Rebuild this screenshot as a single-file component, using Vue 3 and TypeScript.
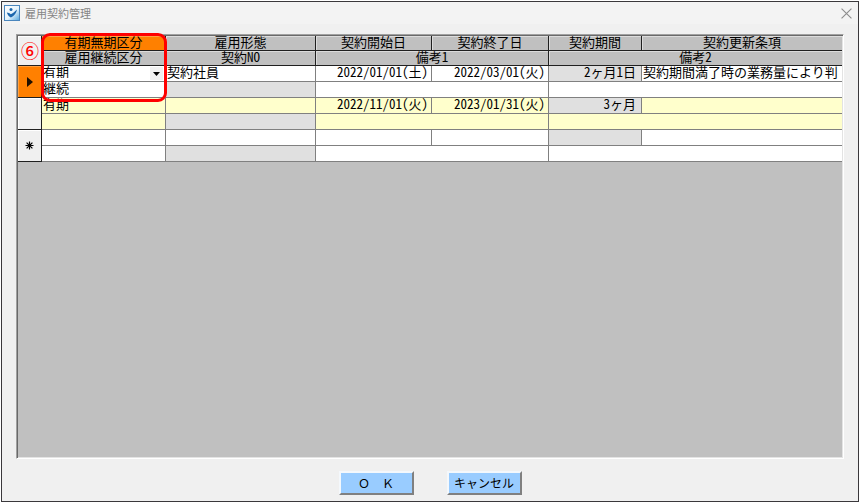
<script setup lang="ts">
import { ref } from 'vue'

interface Contract {
  mark: 'current' | 'none' | 'new'
  term: string
  renewal: string
  form: string
  start: string
  end: string
  period: string
  condition: string
}

const rows = ref<Contract[]>([
  {
    mark: 'current',
    term: '有期',
    renewal: '継続',
    form: '契約社員',
    start: '2022/01/01(土)',
    end: '2022/03/01(火)',
    period: '2ヶ月1日',
    condition: '契約期間満了時の業務量により判',
  },
  {
    mark: 'none',
    term: '有期',
    renewal: '',
    form: '',
    start: '2022/11/01(火)',
    end: '2023/01/31(火)',
    period: '3ヶ月',
    condition: '',
  },
  { mark: 'new', term: '', renewal: '', form: '', start: '', end: '', period: '', condition: '' },
])
</script>

<template>
  <div class="screen">
    <section class="window">
      <header class="titlebar">
        <svg class="logo" viewBox="0 0 16 16" aria-hidden="true">
          <defs>
            <linearGradient id="logo-fill" x1="0" y1="0" x2="1" y2="1">
              <stop offset="0" stop-color="#ffffff" />
              <stop offset="0.55" stop-color="#e4f3fc" />
              <stop offset="1" stop-color="#4fa3dc" />
            </linearGradient>
          </defs>
          <rect x="0.5" y="0.5" width="15" height="15" fill="url(#logo-fill)" stroke="#4a86bd" />
          <circle cx="7" cy="4.6" r="1.5" fill="#1c67ae" />
          <path d="M2.8 7.4C4.4 7.4 5.6 8.2 6.8 9.2C8.6 8.4 10.6 7 13 4.6C12.2 8.4 9.8 11.8 6.8 12.4C5.2 11.8 3.6 9.8 2.8 7.4Z" fill="#1c67ae" />
        </svg>
        <h1>雇用契約管理</h1>
        <button class="close" type="button" aria-label="閉じる">
          <svg viewBox="0 0 10 10" aria-hidden="true">
            <path d="M0.5 0.5L9.5 9.5M9.5 0.5L0.5 9.5" stroke="#8c8c8c" fill="none" />
          </svg>
        </button>
      </header>

      <main class="sheet">
        <table>
          <colgroup>
            <col class="w-mark" />
            <col class="w-term" />
            <col class="w-form" />
            <col class="w-date" />
            <col class="w-end" />
            <col class="w-period" />
            <col />
          </colgroup>
          <thead>
            <tr>
              <th class="mark" rowspan="2"></th>
              <th class="selected">有期無期区分</th>
              <th>雇用形態</th>
              <th>契約開始日</th>
              <th>契約終了日</th>
              <th>契約期間</th>
              <th>契約更新条項</th>
            </tr>
            <tr>
              <th>雇用継続区分</th>
              <th>契約NO</th>
              <th colspan="2">備考1</th>
              <th colspan="2">備考2</th>
            </tr>
          </thead>
          <tbody v-for="(row, i) in rows" :key="i" :class="{ alt: i % 2 === 1 }">
            <tr>
              <th class="mark" :class="{ selected: row.mark === 'current' }" rowspan="2">
                <svg v-if="row.mark === 'current'" class="pointer" viewBox="0 0 6 10" aria-hidden="true">
                  <path d="M0 0L6 5L0 10Z" fill="#201000" />
                </svg>
                <svg v-if="row.mark === 'new'" class="star" viewBox="0 0 9 9" aria-hidden="true">
                  <path d="M4.5 0.5V8.5M0.5 4.5H8.5M1.6 1.6L7.4 7.4M7.4 1.6L1.6 7.4" stroke="#000" stroke-width="1.2" fill="none" />
                </svg>
              </th>
              <td>
                <div v-if="row.mark === 'current'" class="combo">
                  <select v-model="row.term" aria-label="有期無期区分">
                    <option>有期</option>
                    <option>無期</option>
                  </select>
                  <span class="arrow">
                    <svg viewBox="0 0 7 4" aria-hidden="true"><path d="M0 0H7L3.5 4Z" /></svg>
                  </span>
                </div>
                <template v-else>{{ row.term }}</template>
              </td>
              <td>{{ row.form }}</td>
              <td class="right">{{ row.start }}</td>
              <td class="right">{{ row.end }}</td>
              <td class="locked period">{{ row.period }}</td>
              <td class="last">{{ row.condition }}</td>
            </tr>
            <tr>
              <td>{{ row.renewal }}</td>
              <td class="locked"></td>
              <td colspan="2"></td>
              <td class="last" colspan="2"></td>
            </tr>
          </tbody>
        </table>
        <div class="callout"></div>
        <span class="callout-number">⑥</span>
      </main>

      <footer class="actions">
        <button type="button">Ｏ　Ｋ</button>
        <button type="button">キャンセル</button>
      </footer>
    </section>
  </div>
</template>

<style>
body {
  margin: 0;
  background: #fff;
}
</style>

<style scoped>
.screen {
  box-sizing: border-box;
  height: 100vh;
  padding: 1px 2px 1px 1px;
  font-family: "Noto Sans CJK JP", sans-serif;
  font-size: 13px;
  color: #000;
}

.window {
  box-sizing: border-box;
  display: flex;
  flex-direction: column;
  height: 100%;
  border: 1px solid #3a383b;
  background: #f0f0f0;
}

.titlebar {
  display: flex;
  align-items: center;
  gap: 5px;
  height: 22px;
  padding: 0 6px 0 2px;
  background: #f3f3f3;
}

.logo {
  width: 16px;
  height: 16px;
}

h1 {
  flex: 1;
  margin: 0;
  font-size: 11px;
  font-weight: 400;
  line-height: 16px;
  color: #858585;
}

.close {
  display: flex;
  padding: 0;
  border: 0;
  background: none;
}

.close svg {
  width: 11px;
  height: 11px;
}

.sheet {
  position: relative;
  flex: 1;
  margin: 10px 14px 0;
  border: 1px solid;
  border-color: #a0a0a0 #fff #fff #a0a0a0;
  background: #c0c0c0;
  box-shadow: inset 1px 1px #696969, inset -1px -1px #e3e3e3;
}

table {
  width: calc(100% - 2px);
  margin: 1px;
  table-layout: fixed;
  border-spacing: 0;
  font-feature-settings: "hwid";
}

.w-mark {
  width: 24px;
}

.w-term {
  width: 124px;
}

.w-form {
  width: 150px;
}

.w-date {
  width: 116px;
}

.w-end {
  width: 117px;
}

.w-period {
  width: 93px;
}

th,
td {
  box-sizing: border-box;
  height: 16px;
  padding: 0 1px;
  border: 0 solid #808080;
  border-width: 0 1px 1px 0;
  font-weight: 400;
  line-height: 12px;
  white-space: nowrap;
  vertical-align: top;
}

td {
  background: #fff;
}

thead th {
  height: 15px;
  border-color: #202020;
  background: #c0c0c0;
  box-shadow: inset 1px 1px #dcdcdc;
}

th.mark {
  border-color: #202020;
  background: #f0f0f0;
  box-shadow: inset 1px 1px #fff;
  vertical-align: middle;
}

thead .selected,
th.selected {
  background: #ff8000;
  box-shadow: inset 1px 1px #ffa040;
}

.alt td {
  background: #ffffcc;
}

td.locked,
.alt td.locked {
  background: #e0e0e0;
}

.right {
  padding-right: 3px;
  text-align: right;
}

.period {
  padding-right: 5px;
  text-align: right;
}

thead th:last-child,
td.last {
  border-right-width: 0;
}

.pointer {
  display: block;
  width: 6px;
  height: 10px;
  margin: 0 auto;
}

.star {
  display: block;
  width: 9px;
  height: 9px;
  margin: 0 auto;
}

.combo {
  position: relative;
  display: flex;
  height: 14px;
}

select {
  flex: 1;
  height: 12px;
  padding: 0;
  border: 0;
  appearance: none;
  background: none;
  color: #000;
  font: inherit;
  line-height: 12px;
  overflow: visible;
}

.arrow {
  position: absolute;
  top: 1px;
  right: 1px;
  display: flex;
  align-items: center;
  justify-content: center;
  width: 13px;
  height: 13px;
  background: #f0f0f0;
  pointer-events: none;
}

.arrow svg {
  width: 7px;
  height: 4px;
}

.callout {
  position: absolute;
  top: -2px;
  left: 24px;
  box-sizing: border-box;
  width: 126px;
  height: 69px;
  border: 3px solid #f00;
  border-radius: 9px;
}

.callout-number {
  position: absolute;
  top: 5px;
  left: 4px;
  font-size: 18px;
  font-weight: 500;
  line-height: 20px;
  color: #f00;
}

.actions {
  display: flex;
  justify-content: center;
  gap: 33px;
  padding: 12px 0 6px;
}

.actions button {
  box-sizing: border-box;
  width: 75px;
  height: 24px;
  padding: 0;
  border: 2px solid;
  border-color: #f4f8fc #808080 #808080 #f4f8fc;
  background: #99ccff;
  color: #000;
  font: inherit;
  font-size: 12px;
  line-height: 18px;
}
</style>
